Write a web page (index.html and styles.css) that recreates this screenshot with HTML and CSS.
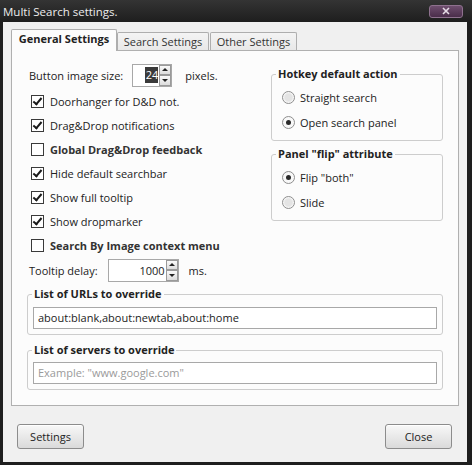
FILE: index.html
```html
<!DOCTYPE html>
<html>
<head>
<meta charset="utf-8">
<link rel="stylesheet" href="styles.css">
</head>
<body>
<div class="window">
  <div class="titlebar">
    <span class="title">Multi Search settings.</span>
    <span class="close-btn"><svg width="10" height="8" viewBox="0 0 10 8"><path d="M2 1 L8 7 M8 1 L2 7" stroke="#e6dce6" stroke-width="1.6" fill="none"/></svg></span>
  </div>
  <div class="client">
    <div class="tabs">
      <div class="tab active">General Settings</div>
      <div class="tab t2">Search Settings</div>
      <div class="tab t3">Other Settings</div>
    </div>
    <div class="panel">
      <div class="top">
        <div class="left">
          <div class="row first">
            <span>Button image size:</span>
            <span class="num size"><span class="val"><span class="sel">24</span></span><span class="spin"><span class="up"></span><span class="down"></span></span></span>
            <span class="unit">pixels.</span>
          </div>
          <div class="check"><span class="box on"></span>Doorhanger for D&amp;D not.</div>
          <div class="check"><span class="box on"></span>Drag&amp;Drop notifications</div>
          <div class="check bold"><span class="box"></span>Global Drag&amp;Drop feedback</div>
          <div class="check"><span class="box on"></span>Hide default searchbar</div>
          <div class="check"><span class="box on"></span>Show full tooltip</div>
          <div class="check"><span class="box on"></span>Show dropmarker</div>
          <div class="check bold"><span class="box"></span>Search By Image context menu</div>
          <div class="row delay">
            <span>Tooltip delay:</span>
            <span class="num wide"><span class="val">1000</span><span class="spin"><span class="up"></span><span class="down"></span></span></span>
            <span class="unit ms">ms.</span>
          </div>
        </div>
        <div class="right">
          <fieldset class="group">
            <legend>Hotkey default action</legend>
            <div class="radio"><span class="dot"></span>Straight search</div>
            <div class="radio"><span class="dot on"></span>Open search panel</div>
          </fieldset>
          <fieldset class="group second">
            <legend>Panel "flip" attribute</legend>
            <div class="radio"><span class="dot on"></span>Flip "both"</div>
            <div class="radio"><span class="dot"></span>Slide</div>
          </fieldset>
        </div>
      </div>
      <fieldset class="list">
        <legend>List of URLs to override</legend>
        <div class="field">about:blank,about:newtab,about:home</div>
      </fieldset>
      <fieldset class="list servers">
        <legend>List of servers to override</legend>
        <div class="field placeholder">Example: "www.google.com"</div>
      </fieldset>
    </div>
    <div class="footer">
      <span class="btn">Settings</span>
      <span class="btn">Close</span>
    </div>
  </div>
</div>
</body>
</html>
```

FILE: styles.css
```css
html, body {
  margin: 0;
  padding: 0;
  background: #1e1e1e;
}
body {
  font-family: "Open Sans", "DejaVu Sans", sans-serif;
  font-size: 11px;
  color: #222;
}
.window {
  width: 472px;
  height: 465px;
  box-sizing: border-box;
  background: #1e1e1e;
  padding: 0 5px 3px 3px;
  display: flex;
  flex-direction: column;
}
.titlebar {
  height: 22px;
  margin: 0 -5px 0 -3px;
  padding: 0 9px 0 3px;
  display: flex;
  align-items: center;
  justify-content: space-between;
  background: linear-gradient(#343434, #1e1e1e);
}
.title {
  color: #ececec;
  font-size: 11.5px;
  line-height: 22px;
  padding-top: 1px;
}
.close-btn {
  width: 32px;
  height: 11px;
  border: 1px solid #8e718e;
  border-radius: 3px;
  background: linear-gradient(#6e4e6e, #4a2d4a);
  display: flex;
  align-items: center;
  justify-content: center;
}
.client {
  flex: 1;
  background: #f0f0f0;
  display: flex;
  flex-direction: column;
}
.tabs {
  display: flex;
  align-items: flex-end;
  height: 28px;
  padding-left: 8px;
}
.tab {
  box-sizing: border-box;
  height: 18px;
  border: 1px solid #aeaeae;
  border-bottom: none;
  border-radius: 2px 2px 0 0;
  background: linear-gradient(#f4f4f4, #e8e8e8);
  color: #333;
  line-height: 17px;
  text-align: center;
  margin-right: 1px;
}
.tab.active {
  width: 106px;
  height: 22px;
  margin-bottom: -1px;
  position: relative;
  z-index: 1;
  background: #fcfcfc;
  font-weight: bold;
  color: #222;
  line-height: 18px;
  margin-right: 0;
}
.tab.t2 { width: 92px; }
.tab.t3 { width: 87px; }
.panel {
  box-sizing: border-box;
  height: 356px;
  margin: 0 8px;
  border: 1px solid #b0b0b0;
  background: #fcfcfc;
  padding: 0 15px;
}
.top {
  display: flex;
  justify-content: space-between;
  padding-top: 12px;
}
.left {
  padding-left: 2px;
  display: flex;
  flex-direction: column;
}
.row {
  height: 24px;
  display: flex;
  align-items: center;
}
.row.first { margin-bottom: 2px; }
.row.delay { margin-top: 1px; }
.num {
  box-sizing: border-box;
  height: 23px;
  border: 1px solid #a8a8a8;
  background: #fff;
  display: flex;
  align-items: center;
  justify-content: flex-end;
}
.num.size { width: 40px; margin-left: 9px; }
.num.wide { width: 71px; margin-left: 10px; }
.val {
  display: flex;
  align-items: center;
}
.sel {
  background: #3a3a3a;
  color: #fff;
  padding: 0 0 0 1px;
  line-height: 16px;
}
.spin {
  display: flex;
  flex-direction: column;
  width: 12px;
  height: 21px;
  margin-left: 1px;
}
.spin .up, .spin .down {
  flex: 1;
  box-sizing: border-box;
  border: 1px solid #9a9a9a;
  background: linear-gradient(#fafafa, #dcdcdc);
  display: flex;
  align-items: center;
  justify-content: center;
}
.spin .up::after {
  content: "";
  border-left: 3px solid transparent;
  border-right: 3px solid transparent;
  border-bottom: 3px solid #222;
}
.spin .down::after {
  content: "";
  border-left: 3px solid transparent;
  border-right: 3px solid transparent;
  border-top: 3px solid #222;
}
.unit { margin-left: 13px; }
.unit.ms { margin-left: 10px; }
.check {
  height: 24px;
  display: flex;
  align-items: center;
  padding-left: 2px;
  color: #222;
}
.check.bold { font-weight: bold; color: #333; }
.box {
  box-sizing: border-box;
  width: 13px;
  height: 13px;
  border: 1px solid #3a3a3a;
  background: #fff;
  margin-right: 6px;
  position: relative;
}
.box.on::after {
  content: "";
  position: absolute;
  left: 3px;
  top: 0px;
  width: 3px;
  height: 7px;
  border-right: 2px solid #1a1a1a;
  border-bottom: 2px solid #1a1a1a;
  transform: rotate(40deg);
}
.right {
  width: 172px;
  margin-top: 3px;
}
fieldset {
  margin: 0;
  border: 1px solid #cdcdcd;
  border-radius: 3px;
  min-width: 0;
}
legend {
  font-weight: bold;
  line-height: 16px;
  padding: 0 2px;
  color: #222;
}
.group {
  padding: 3px 10px 5px 10px;
}
.group legend { margin-left: -6px; }
.group.second { margin-top: 5px; }
.radio {
  height: 25px;
  display: flex;
  align-items: center;
}
.dot {
  box-sizing: border-box;
  width: 13px;
  height: 13px;
  border-radius: 50%;
  border: 1px solid #8e8e8e;
  background: radial-gradient(circle, #e4e4e4 0 45%, #fafafa 70%);
  margin-right: 5px;
  display: flex;
  align-items: center;
  justify-content: center;
}
.dot.on {
  background: #f8f8f8;
}
.dot.on::after {
  content: "";
  width: 5px;
  height: 5px;
  border-radius: 50%;
  background: #2a2a2a;
}
.list {
  margin-top: 4px;
  padding: 5px;
}
.list legend { margin-left: -1px; }
.list.servers { margin-top: 7px; padding-top: 4px; }
.field {
  box-sizing: border-box;
  height: 22px;
  border: 1px solid #a8a8a8;
  background: #fff;
  padding: 0 4px;
  line-height: 20px;
  color: #222;
}
.field.placeholder { color: #9a9a9a; }
.footer {
  display: flex;
  justify-content: space-between;
  padding: 18px 15px 0 14px;
}
.btn {
  box-sizing: border-box;
  width: 67px;
  height: 25px;
  border: 1px solid #8c8c8c;
  border-radius: 3px;
  background: linear-gradient(#f8f8f8, #dadada);
  display: flex;
  align-items: center;
  justify-content: center;
  color: #222;
  box-shadow: inset 0 1px 0 #fff;
}
```
